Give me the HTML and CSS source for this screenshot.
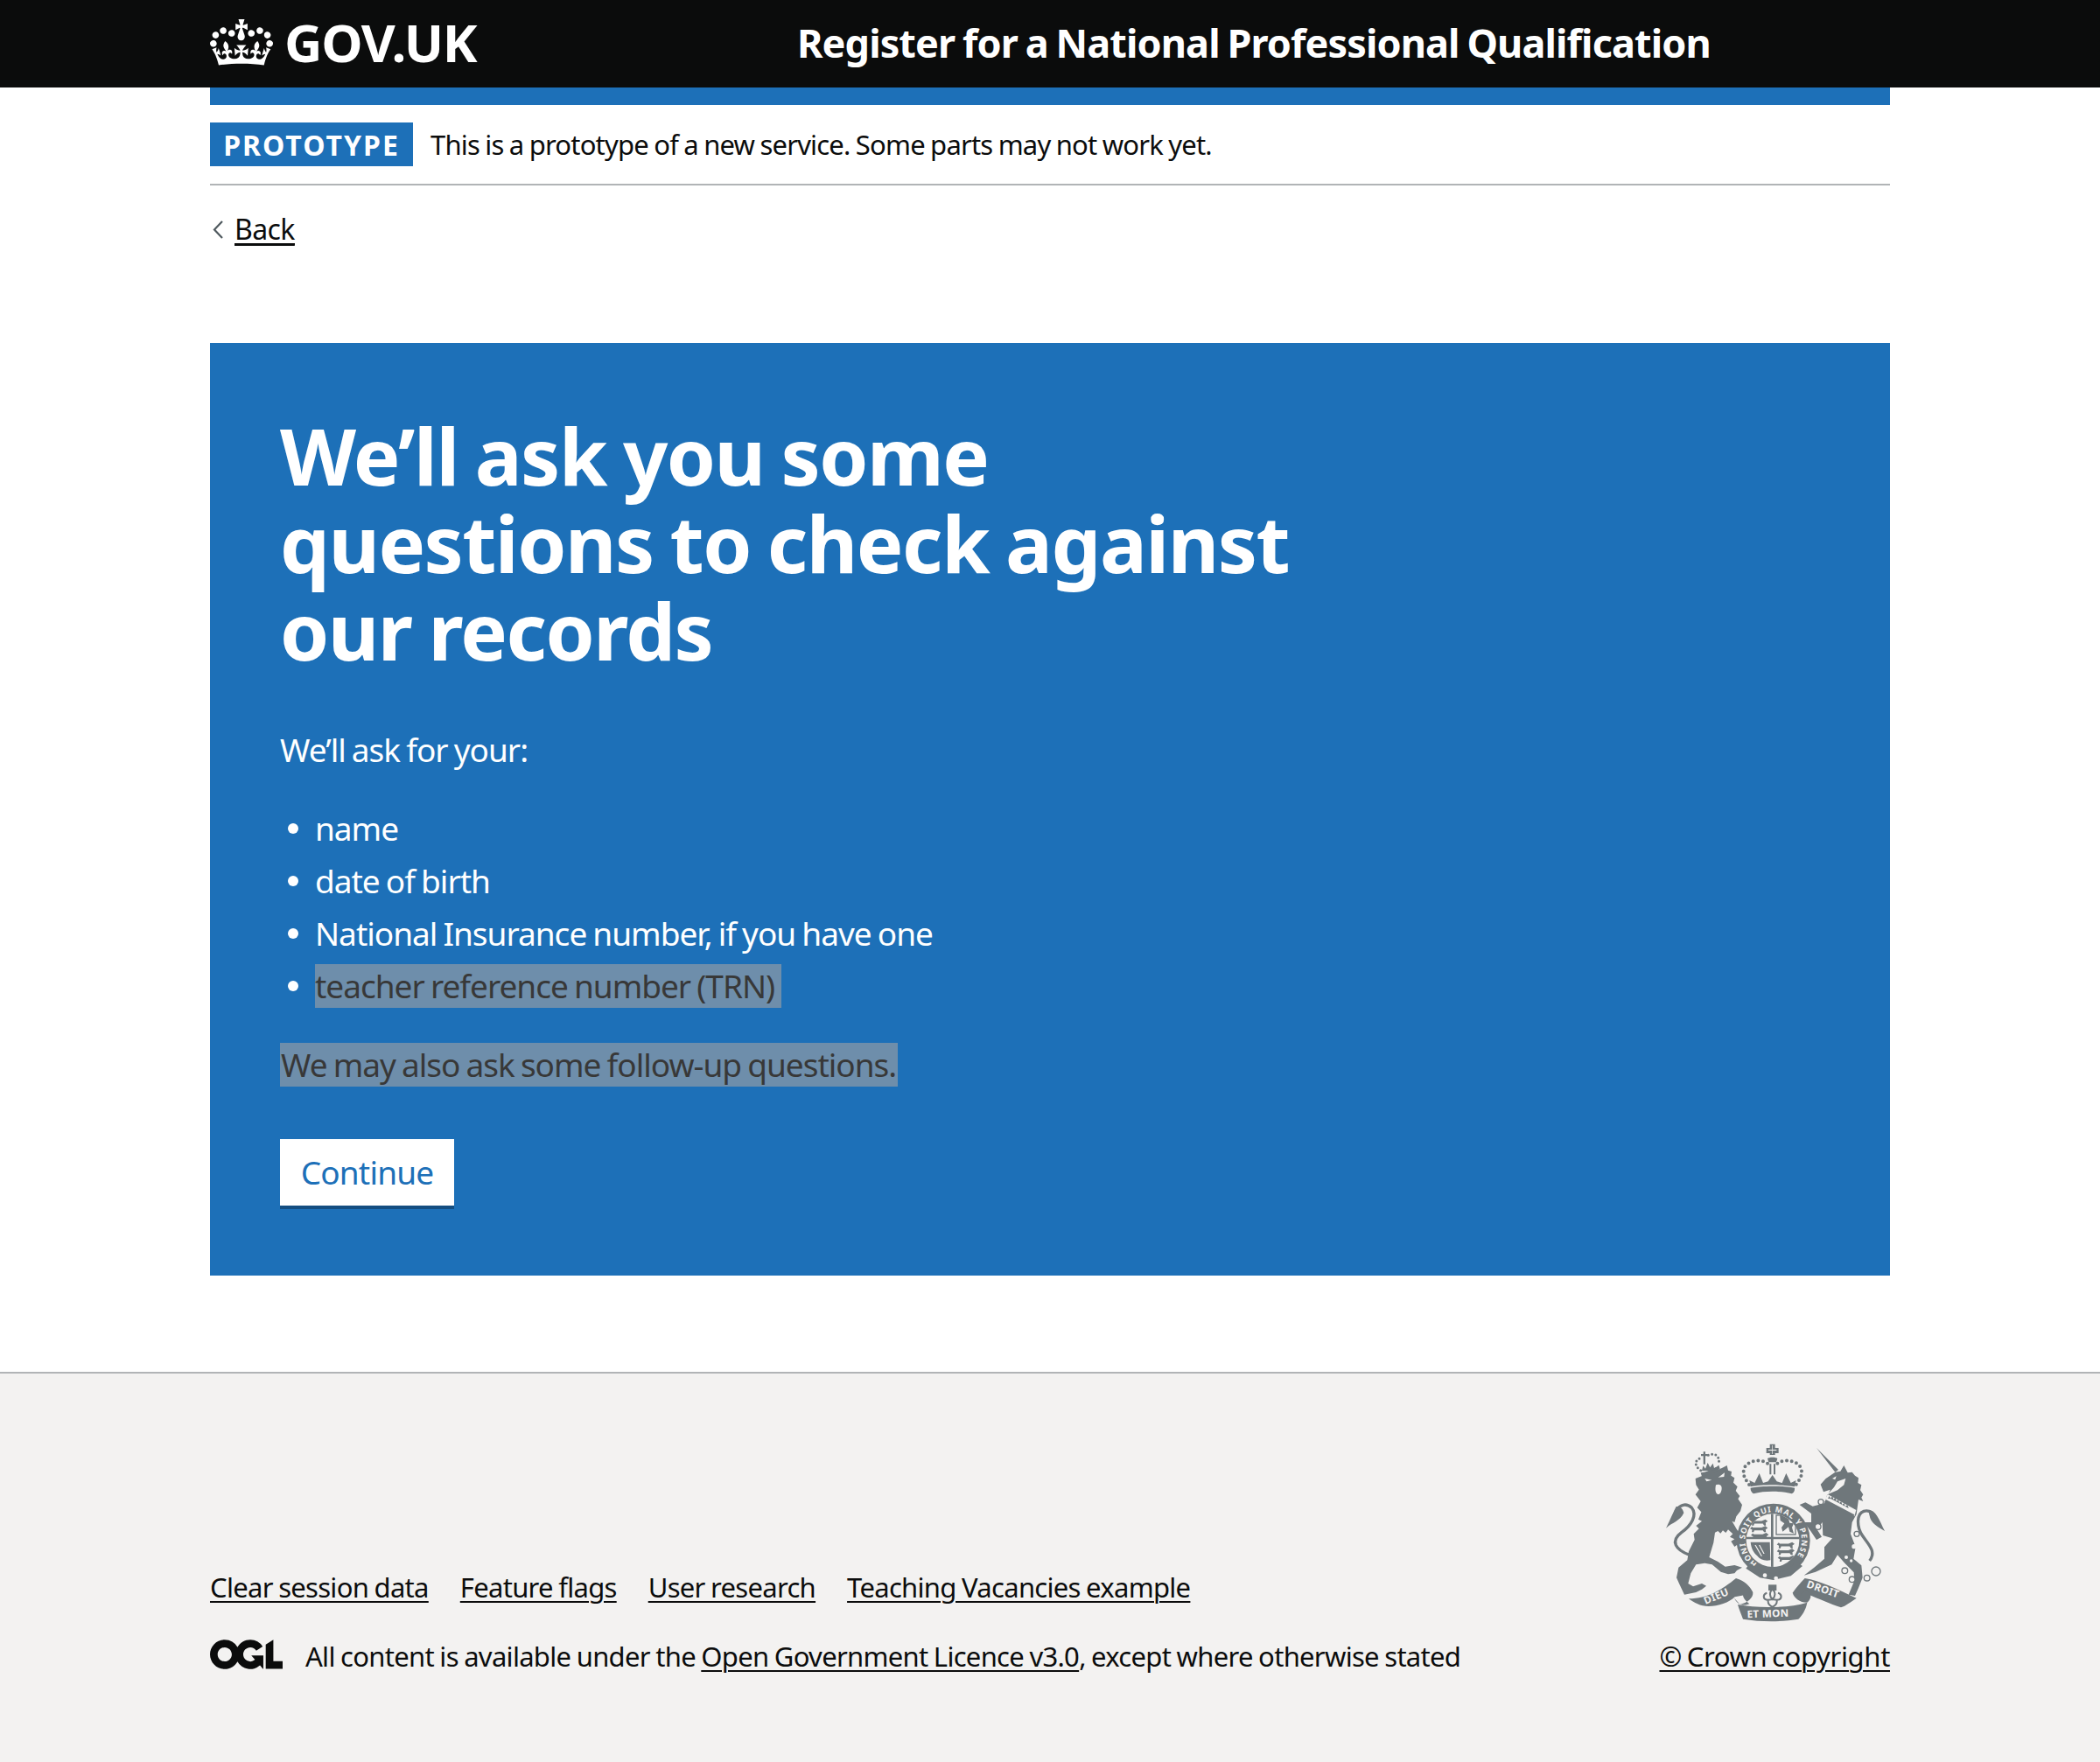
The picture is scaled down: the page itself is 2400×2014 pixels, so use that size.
FILE: index.html
```html
<!DOCTYPE html>
<html lang="en">
<head>
<meta charset="utf-8">
<title>Register for a National Professional Qualification</title>
<link rel="stylesheet" href="styles.css">
</head>
<body>
<header class="header">
  <div class="container header-inner">
    <a class="logo" href="#">
      <svg class="crown" viewBox="0 0 132 97" aria-hidden="true"><path fill="currentColor" fill-rule="evenodd" d="M25 30.2c3.5 1.5 7.7-.2 9.1-3.7 1.5-3.6-.2-7.8-3.9-9.2-3.6-1.4-7.6.3-9.1 3.9-1.4 3.5.3 7.5 3.9 9zM9 39.5c3.6 1.5 7.8-.2 9.2-3.7 1.5-3.6-.2-7.8-3.9-9.1-3.6-1.5-7.6.2-9.1 3.8-1.4 3.5.3 7.5 3.8 9zM4.4 57.2c3.5 1.5 7.7-.2 9.1-3.8 1.5-3.6-.2-7.7-3.9-9.1-3.5-1.5-7.6.3-9.1 3.8-1.4 3.5.3 7.6 3.9 9.1zm38.3-21.4c3.5 1.5 7.7-.2 9.1-3.8 1.5-3.6-.2-7.7-3.9-9.1-3.6-1.5-7.6.3-9.1 3.8-1.3 3.6.4 7.7 3.9 9.1zm64.4-5.6c-3.6 1.5-7.8-.2-9.1-3.7-1.5-3.6.2-7.8 3.8-9.2 3.6-1.4 7.7.3 9.2 3.9 1.3 3.5-.4 7.5-3.9 9zm15.9 9.3c-3.6 1.5-7.7-.2-9.1-3.7-1.5-3.6.2-7.8 3.7-9.1 3.6-1.5 7.7.2 9.2 3.8 1.5 3.5-.3 7.5-3.8 9zm4.7 17.7c-3.6 1.5-7.8-.2-9.2-3.8-1.5-3.6.2-7.7 3.9-9.1 3.6-1.5 7.7.3 9.2 3.8 1.3 3.5-.4 7.6-3.9 9.1zM89.3 35.8c-3.6 1.5-7.8-.2-9.2-3.8-1.4-3.6.2-7.7 3.9-9.1 3.6-1.5 7.7.3 9.2 3.8 1.4 3.6-.3 7.7-3.9 9.1zM69.7 17.7l8.9 4.7V9.3l-8.9 2.8c-.2-.3-.5-.6-.9-.9L72.4 0H59.6l3.6 11.2c-.3.3-.6.5-.9.9l-8.8-2.8v13.1l8.8-4.7c.3.3.6.7.9.9l-5 15.4v.1c-.2.8-.4 1.6-.4 2.4 0 4.1 3.1 7.5 7 8.1h1.2c3.9-.6 7-4 7-8.1 0-.8-.1-1.7-.4-2.4V34l-5.1-15.4c.4-.2.7-.6 1-.9zM66 92.8c16.9 0 32.8 1.1 47.1 3.2 4-16.9 8.9-26.7 14-33.5l-9.6-3.4c1 4.9 1.1 7.2 0 10.2-1.5-1.4-3-4.3-4.2-8.7L108.6 76c2.8-2 5-3.2 7.5-3.3-4.4 9.4-10 11.9-13.6 11.2-4.3-.8-6.3-4.6-5.6-7.9 1-4.7 5.7-5.9 8-.5 4.3-8.7-3-11.4-7.6-8.8 7.1-7.2 7.9-13.5 2.1-21.1-8 6.1-8.1 12.3-4.5 20.8-4.7-5.4-12.1-2.5-9.5 6.2 3.4-5.2 7.9-2 7.2 3.1-.6 4.3-6.4 7.8-13.5 7.2-10.3-.9-10.9-8-11.2-13.8 2.5-.5 7.1 1.8 11 7.3L80.2 60c-4.1 4.4-8 5.3-12.3 5.4 1.4-4.4 8-11.6 8-11.6H55.5s6.4 7.2 7.9 11.6c-4.2-.1-8-1-12.3-5.4l1.4 16.4c3.9-5.5 8.5-7.7 10.9-7.3-.3 5.8-.9 12.8-11.1 13.8-7.2.6-12.9-2.9-13.5-7.2-.7-5 3.8-8.3 7.1-3.1 2.7-8.7-4.6-11.6-9.4-6.2 3.7-8.5 3.6-14.7-4.6-20.8-5.8 7.6-5 13.9 2.2 21.1-4.7-2.6-11.9.1-7.7 8.8 2.3-5.5 7.1-4.2 8.1.5.7 3.3-1.3 7.1-5.7 7.9-3.5.7-9-1.8-13.5-11.2 2.5.1 4.7 1.3 7.5 3.3l-4.7-15.4c-1.2 4.4-2.7 7.2-4.3 8.7-1.1-3-.9-5.3 0-10.2l-9.5 3.4c5 6.9 9.9 16.7 14 33.5 14.8-2.1 30.8-3.2 47.7-3.2z"/></svg>
      <span class="logo-text">GOV.UK</span>
    </a>
    <a class="service-name" href="#">Register for a National Professional Qualification</a>
  </div>
</header>
<div class="container">
  <div class="strip"></div>
  <div class="phase">
    <strong class="tag">PROTOTYPE</strong>
    <span class="phase-text">This is a prototype of a new service. Some parts may not work yet.</span>
  </div>
  <a class="back" href="#"><svg class="chev" viewBox="0 0 12 21" aria-hidden="true"><path d="M11 1 2 10.5 11 20" fill="none" stroke="#505a5f" stroke-width="2.2"/></svg><span class="back-label">Back</span></a>
  <main class="panel">
    <h1 class="title">We’ll ask you some questions to check against our records</h1>
    <p class="body">We’ll ask for your:</p>
    <ul class="list">
      <li>name</li>
      <li>date of birth</li>
      <li>National Insurance number, if you have one</li>
      <li><span class="hl">teacher reference number (TRN)</span></li>
    </ul>
    <p class="body"><span class="hl hl-tight">We may also ask some follow-up questions.</span></p>
    <a class="button" href="#">Continue</a>
  </main>
</div>
<footer class="footer">
  <div class="container footer-inner">
    <div class="footer-meta">
      <ul class="footer-links">
        <li><a href="#">Clear session data</a></li>
        <li><a href="#">Feature flags</a></li>
        <li><a href="#">User research</a></li>
        <li><a href="#">Teaching Vacancies example</a></li>
      </ul>
      <div class="licence">
        <svg class="ogl" viewBox="0 0 483.2 195.7" aria-hidden="true"><path fill="currentColor" d="M421.5 142.8V.1l-50.7 32.3v161.1h112.4v-50.7zm-122.3-9.6A47.12 47.12 0 0 1 221 97.8c0-26 21.1-47.1 47.1-47.1 16.7 0 31.4 8.7 39.7 21.8l42.7-27.2A97.63 97.63 0 0 0 268.1 0c-36.5 0-68.3 20.1-85.1 49.7A98 98 0 0 0 97.8 0C43.9 0 0 43.9 0 97.8s43.9 97.8 97.8 97.8c36.5 0 68.3-20.1 85.1-49.7a97.76 97.76 0 0 0 149.6 25.4l19.4 22.2h3v-87.8h-80l24.3 27.5zM97.8 145c-26 0-47.1-21.1-47.1-47.1s21.1-47.1 47.1-47.1 47.2 21 47.2 47S123.8 145 97.8 145"/></svg>
        <span>All content is available under the <a href="#">Open Government Licence v3.0</a>, except where otherwise stated</span>
      </div>
    </div>
    <div class="copyright">
      <svg class="arms" viewBox="60 60 780 630" aria-hidden="true">
        <defs>
          <path id="garter-ring" d="M384 471A97 97 0 1 1 496 471"/>
          <path id="pl" d="M0 8 6 2 10 5 38 5 50 0 58 6 51 11 52 20 46 20 42 14 14 14 12 20 6 20 7 12Z"/>
          <clipPath id="shield-clip"><circle cx="438" cy="392" r="91"/></clipPath>
        </defs>
        <g class="a-fill">
          <!-- lion -->
          <g transform="translate(45 30)">
            <path d="M128 150C150 140 200 125 236 105L240 122 252 126 250 140 262 148 258 164 272 178 266 192 280 210 274 220 288 240 282 262 268 280 262 300 250 295 245 282 270 325 300 368 298 385 286 378 282 388 270 378 262 384 250 365 262 358 246 350 256 340 240 325 232 336 222 328 214 338 205 330 195 335 190 370 175 420 205 435 230 452 262 447 288 455 270 465 262 475 240 478 215 470 185 445 160 440 130 445 112 475 103 510 120 520 150 510 165 518 150 530 130 540 90 548 72 510 63 490 70 455 100 430 105 400 125 360 122 340 140 322 130 312 150 296 138 290 148 265 134 250 146 228 128 205 140 188 130 172Z"/>
            <path class="a-bg" d="M160 150l24 5-18 5zM228 130l-22 16 20-2zM198 172c10-4 20 0 20 10 0 14-6 22-12 22-8 0-12-14-8-32z"/>
            <path class="a-line" d="M108 412C60 395 40 365 80 335 115 310 135 275 115 250 95 232 75 240 60 262" stroke-width="10"/>
            <path d="M62 246C45 280 35 305 27 320 50 300 75 296 88 268 84 250 74 244 62 246Z"/>
            <!-- lion's crown -->
            <path d="M146 130C165 128 190 118 208 104L212 116C195 130 170 140 150 143Z"/>
            <path class="a-line" d="M146 122C122 106 125 85 148 79M172 70C194 60 212 72 208 98" stroke-width="9" stroke-linecap="round" stroke-dasharray="0 13"/>
            <path d="M155 58h7v8h8v7h-8v28h-7V73h-8v-7h8z"/>
            <path d="M150 124l4-18 8 10 8-20 8 16 10-14 4 16 8-4-6 12z"/>
          </g>
          <!-- unicorn -->
          <g transform="translate(420 30)">
            <path d="M168 45L243 120 232 128Z"/>
            <path d="M182 170L200 150 232 128 250 125 262 105 275 130 290 128 300 140 312 148 310 165 322 172 318 190 328 205 322 215 328 228 312 222 305 272 290 300 285 340 302 385 295 425 322 448 326 490 312 525 300 552 278 548 298 500 296 472 265 440 240 412 220 445 165 470 125 482 160 455 195 425 195 385 222 355 190 345 188 300 170 325 186 350 168 360 148 330 125 300 150 300 150 270 110 240 130 232 155 245 195 235 205 205 240 190 262 172 268 150 240 160 228 180 210 200 215 188 192 196Z"/>
            <path class="a-bg" d="M206 204L304 258 298 280 196 226Z"/>
            <path d="M200 222L298 274 294 283 196 230Z"/>
            <path d="M207 218l5-8 4 8 7-8 3 12 7-7 3 13 7-6 3 12 7-6 3 12 7-6 3 12 8-6 4 12-60-32z"/>
            <path class="a-line" d="M350 432C375 400 345 375 325 345 305 315 305 270 330 262 350 256 368 270 372 292" stroke-width="10"/>
            <path d="M345 258C372 258 382 290 402 330 382 318 360 308 352 286Z"/>
            <circle class="a-bg" cx="297" cy="383" r="8"/>
            <circle class="a-bg" cx="270" cy="420" r="6"/>
            <circle class="a-bg" cx="287" cy="432" r="5"/>
            <path class="a-bg" d="M222 150l14-8-4 12z"/>
            <g class="a-ring">
              <circle cx="183" cy="230" r="9"/>
              <circle cx="173" cy="315" r="10"/>
              <circle cx="306" cy="340" r="9"/>
              <circle cx="265" cy="466" r="10"/>
              <circle cx="290" cy="496" r="10"/>
              <circle cx="341" cy="491" r="10"/>
              <circle cx="372" cy="468" r="15"/>
            </g>
            <circle cx="165" cy="256" r="9"/>
          </g>
          <!-- main crown -->
          <path d="M428 62h18v13h12v18h-12v6h-18v-6h-12V75h12z"/>
          <path class="a-bg" d="M436 66h2v15h13v3h-13v12h-2V84h-13v-3h13z"/>
          <path d="M420 112c4-6 30-6 34 0l-4 12h-26z"/>
          <path d="M427 130h6v36h-6zM441 130h6v36h-6z"/>
          <path class="a-line" d="M420 128C395 108 340 120 338 155 336 175 350 190 362 208" stroke-width="12" stroke-linecap="round" stroke-dasharray="0 17"/>
          <path class="a-line" d="M454 128C480 108 535 120 537 155 539 175 525 190 513 208" stroke-width="12" stroke-linecap="round" stroke-dasharray="0 17"/>
          <path d="M362 208C400 200 475 200 513 208L518 186 500 195 484 162 470 195 452 190 437 168 422 190 405 195 392 162 376 195 358 186Z"/>
          <path d="M362 212C400 204 475 204 513 212 514 222 510 228 503 232 465 222 410 222 372 232 365 228 361 220 362 212Z"/>
          <!-- garter and shield -->
          <circle cx="440" cy="392" r="126"/>
          <path class="a-bg" d="M366 240C405 230 470 230 510 240L498 256C465 246 410 246 378 256Z"/>
          <circle class="a-bg" cx="438" cy="392" r="91"/>
          <text class="a-text a-garter"><textPath href="#garter-ring">HONI SOIT QUI MAL Y PENSE</textPath></text>
          <g clip-path="url(#shield-clip)">
            <path d="M432 296h8v192h-8zM346 380h186v8h-186z"/>
            <g transform="translate(360 320) scale(1.05)"><use href="#pl"/><use href="#pl" y="22"/><use href="#pl" y="44" x="3"/></g>
            <path d="M462 304l28 6 6 22 14 2-6 14 6 20-14-6-4-16-20 16-4-14 10-14-14-10z"/>
            <rect x="450" y="306" width="66" height="66" fill="none" stroke="#6f777b" stroke-width="4"/>
            <g transform="translate(452 398) scale(1.05)"><use href="#pl"/><use href="#pl" y="22"/><use href="#pl" y="44" x="3"/></g>
            <path d="M362 398h66l2 62c-20 4-36-2-46-16-12-10-20-26-22-46zM372 404l46 0-2 46c-14 0-28-12-44-46z"/>
            <path class="a-bg" d="M376 408l4 0 22 38-4 0zM390 408l4 0 16 30-4 0z"/>
          </g>
          <path d="M360 470 400 498 440 505 482 496 520 466 540 480 500 514 440 528 394 520 346 488Z"/>
          <circle class="a-bg" cx="411" cy="512" r="7"/>
          <circle class="a-bg" cx="449" cy="522" r="7"/>
          <!-- fleur-de-lis -->
          <path d="M423 544h28v20h-28z"/>
          <path class="a-line" d="M437 558c-12 14-10 26 0 36 10-10 12-22 0-36zM418 572c-14 4-16 24 4 24 8 0 12-2 15-2 3 0 7 2 15 2 20 0 18-20 4-24M422 596c-2 14 8 22 15 24 7-2 17-10 15-24" stroke-width="6"/>
          <!-- motto ribbons -->
          <path d="M150 592C215 592 265 560 312 522 342 530 360 550 370 570 352 578 330 582 308 586 290 605 250 618 218 618 190 618 168 606 150 592Z"/>
          <path d="M306 590C316 608 330 620 358 610 340 596 330 580 340 570L370 570C372 590 350 606 326 612Z"/>
          <path d="M318 612C385 625 490 625 556 605 552 630 538 650 526 662 470 672 398 672 336 662 330 645 322 628 318 612Z"/>
          <path d="M506 572C520 552 535 535 548 522 600 530 660 560 725 590 700 606 690 616 672 622 635 610 592 590 560 578 545 588 522 590 506 572Z"/>
          <path d="M506 572C512 590 530 605 556 605 575 590 570 570 552 562 540 575 525 582 506 572Z"/>
          <text class="a-text a-motto" transform="translate(208 612) rotate(-23)">DIEU</text>
          <text class="a-text a-motto" transform="translate(350 658) rotate(-2)">ET MON</text>
          <text class="a-text a-motto" transform="translate(552 552) rotate(19)">DROIT</text>
        </g>
      </svg>
      <a href="#">© Crown copyright</a>
    </div>
  </div>
</footer>
</body>
</html>
```
FILE: styles.css
```css
* { box-sizing: border-box; }
html, body { margin: 0; padding: 0; }
body { font-family: "Noto Sans", sans-serif; color: #0b0c0c; background: #fff; min-height: 2014px; display: flex; flex-direction: column; }
a { color: inherit; text-decoration-thickness: 2px; text-underline-offset: 4px; }
.container { width: 1920px; margin: 0 auto; }
.header { background: #0b0c0c; height: 100px; color: #fff; }
.header-inner { display: flex; align-items: center; height: 100px; }
.logo { display: flex; align-items: center; gap: 14px; width: 671px; padding-bottom: 4px; color: #fff; text-decoration: none; }
.crown { width: 72px; height: 53px; flex: none; }
.logo-text { font-size: 60px; font-weight: 700; line-height: 96px; letter-spacing: -1.3px; margin-left: -1px; }
.service-name { color: #fff; text-decoration: none; font-size: 45px; font-weight: 700; letter-spacing: -0.9px; word-spacing: -2px; position: relative; top: -2px; }
.strip { height: 20px; background: #1d70b8; }
.phase { display: flex; align-items: center; gap: 20px; padding: 20px 0; border-bottom: 2px solid #b1b4b6; height: 92px; }
.tag { background: #1d70b8; color: #fff; height: 50px; width: 232px; display: flex; align-items: center; justify-content: center; font-size: 32px; letter-spacing: 2px; }
.phase-text { font-size: 31px; letter-spacing: -0.8px; word-spacing: -1px; }
.back { display: flex; width: max-content; align-items: center; gap: 13px; font-size: 32px; margin-top: 30px; padding-left: 3px; line-height: 40px; letter-spacing: -0.6px; }
.back-label { text-decoration: underline; }
.chev { width: 12px; height: 21px; flex: none; }
.panel { background: #1d70b8; color: #fff; margin-top: 110px; height: 1066px; padding: 78px 80px 80px; }
.title { margin: 0 0 62px; font-size: 90px; line-height: 100px; font-weight: 700; width: 1200px; letter-spacing: -1.5px; word-spacing: -3px; }
.body { margin: 0 0 40px; font-size: 37px; line-height: 50px; letter-spacing: -1px; word-spacing: -1.5px; }
.list { margin: 0 0 40px; padding: 0 0 0 40px; font-size: 37px; line-height: 50px; letter-spacing: -1px; word-spacing: -1.5px; list-style: none; }
.list li { margin-bottom: 10px; position: relative; }
.list li::before { content: ""; position: absolute; left: -31px; top: 19px; width: 12px; height: 12px; border-radius: 50%; background: #fff; }
.hl { background: #6e8eab; color: #383838; padding: 0 8px 0 0; display: inline-block; }
.hl-tight { padding: 0 2px 0 1px; }
.button { display: inline-block; background: #fff; color: #1d70b8; text-decoration: none; font-size: 37px; line-height: 50px; padding: 13px 0 13px; width: 199px; text-align: center; height: 76px; box-shadow: 0 4px 0 #144e81; margin-top: 20px; letter-spacing: -0.8px; }
.footer { margin-top: 110px; background: #f3f2f1; border-top: 2px solid #b1b4b6; flex: 1; }
.footer-inner { display: flex; justify-content: space-between; align-items: flex-end; padding-top: 80px; padding-bottom: 80px; }
.footer-links { list-style: none; margin: 0 0 39px; padding: 0; display: flex; gap: 36px; font-size: 31px; line-height: 40px; letter-spacing: -0.7px; word-spacing: -1px; }
.licence { display: flex; align-items: center; gap: 26px; font-size: 31px; line-height: 40px; letter-spacing: -0.7px; word-spacing: -1px; }
.ogl { width: 83px; height: 34px; flex: none; position: relative; top: -2px; }
.copyright { display: flex; flex-direction: column; align-items: flex-end; font-size: 31px; line-height: 40px; gap: 13px; letter-spacing: -0.35px; word-spacing: -2px; }
.arms { width: 260px; height: 210px; display: block; }
.a-fill { fill: #6f777b; }
.a-bg { fill: #f3f2f1; }
.a-line { fill: none; stroke: #6f777b; }
.a-ring circle { fill: #f3f2f1; stroke: #6f777b; stroke-width: 4; }
.a-text { fill: #f3f2f1; font-family: "Noto Sans", sans-serif; font-weight: 700; letter-spacing: 0; word-spacing: 0; }
.a-garter { font-size: 27px; letter-spacing: 2.8px; }
.a-motto { font-size: 35px; letter-spacing: 1px; }
```
